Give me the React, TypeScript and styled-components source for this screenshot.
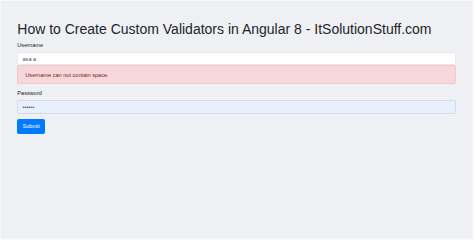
import React from "react";
import styled, { createGlobalStyle } from "styled-components";

const Global = createGlobalStyle`
  html { font-size: 5.6px; background: #f8f8fa; }
  body { margin: 0; font-family: "Liberation Sans", Arial, sans-serif; color: #212529; }
  * { box-sizing: border-box; }
`;

const Frame = styled.div`
  margin: 1px 2px 2px 1px;
  height: calc(100vh - 3px);
  background: #eff0f4;
  padding: 20.3px 15.7px 0 16.3px;
`;

const Title = styled.h1`
  margin: 0 0 0.5rem;
  font-size: 2.5rem;
  font-weight: 400;
  line-height: 1.2;
  color: #212529;
`;

const Group = styled.div<{ $gap?: number }>`
  margin-bottom: ${(p) => p.$gap ?? 5.6}px;
`;

const Label = styled.label`
  display: block;
  font-size: 1rem;
  line-height: 1.5;
  margin-bottom: 0.5rem;
  color: #212529;
`;

const Input = styled.input<{ $autofill?: boolean }>`
  display: block;
  width: 100%;
  height: 13.4px;
  padding: 0 0.75rem;
  font-family: "Liberation Sans", Arial, sans-serif;
  font-size: 1rem;
  color: #495057;
  background: ${(p) => (p.$autofill ? "#e8f0fe" : "#ffffff")};
  border: 0.7px solid ${(p) => (p.$autofill ? "#d3dbe8" : "#e6e8eb")};
  border-radius: 1.4px;
  outline: none;
`;

const Alert = styled.div`
  padding: 0.75rem 1.25rem;
  font-size: 1rem;
  line-height: 1.5;
  color: #721c24;
  background: #f8d7da;
  border: 0.7px solid #f5c6cb;
  border-radius: 1.4px;
  margin-bottom: 0.85rem;
`;

const Button = styled.button`
  display: inline-block;
  padding: 0.375rem 0.75rem;
  font-family: "Liberation Sans", Arial, sans-serif;
  font-size: 1rem;
  line-height: 1.5;
  color: #ffffff;
  background: #007bff;
  border: 0.7px solid #007bff;
  border-radius: 1.4px;
`;

export default function App() {
  return (
    <>
      <Global />
      <Frame>
        <Title>How to Create Custom Validators in Angular 8 - ItSolutionStuff.com</Title>
        <Group $gap={0}>
          <Label>Username</Label>
          <Input defaultValue="asa a" readOnly />
          <Alert>Username can not contain space.</Alert>
        </Group>
        <Group>
          <Label>Password</Label>
          <Input type="password" defaultValue="aaaaaa" readOnly $autofill />
        </Group>
        <Button>Submit</Button>
      </Frame>
    </>
  );
}
